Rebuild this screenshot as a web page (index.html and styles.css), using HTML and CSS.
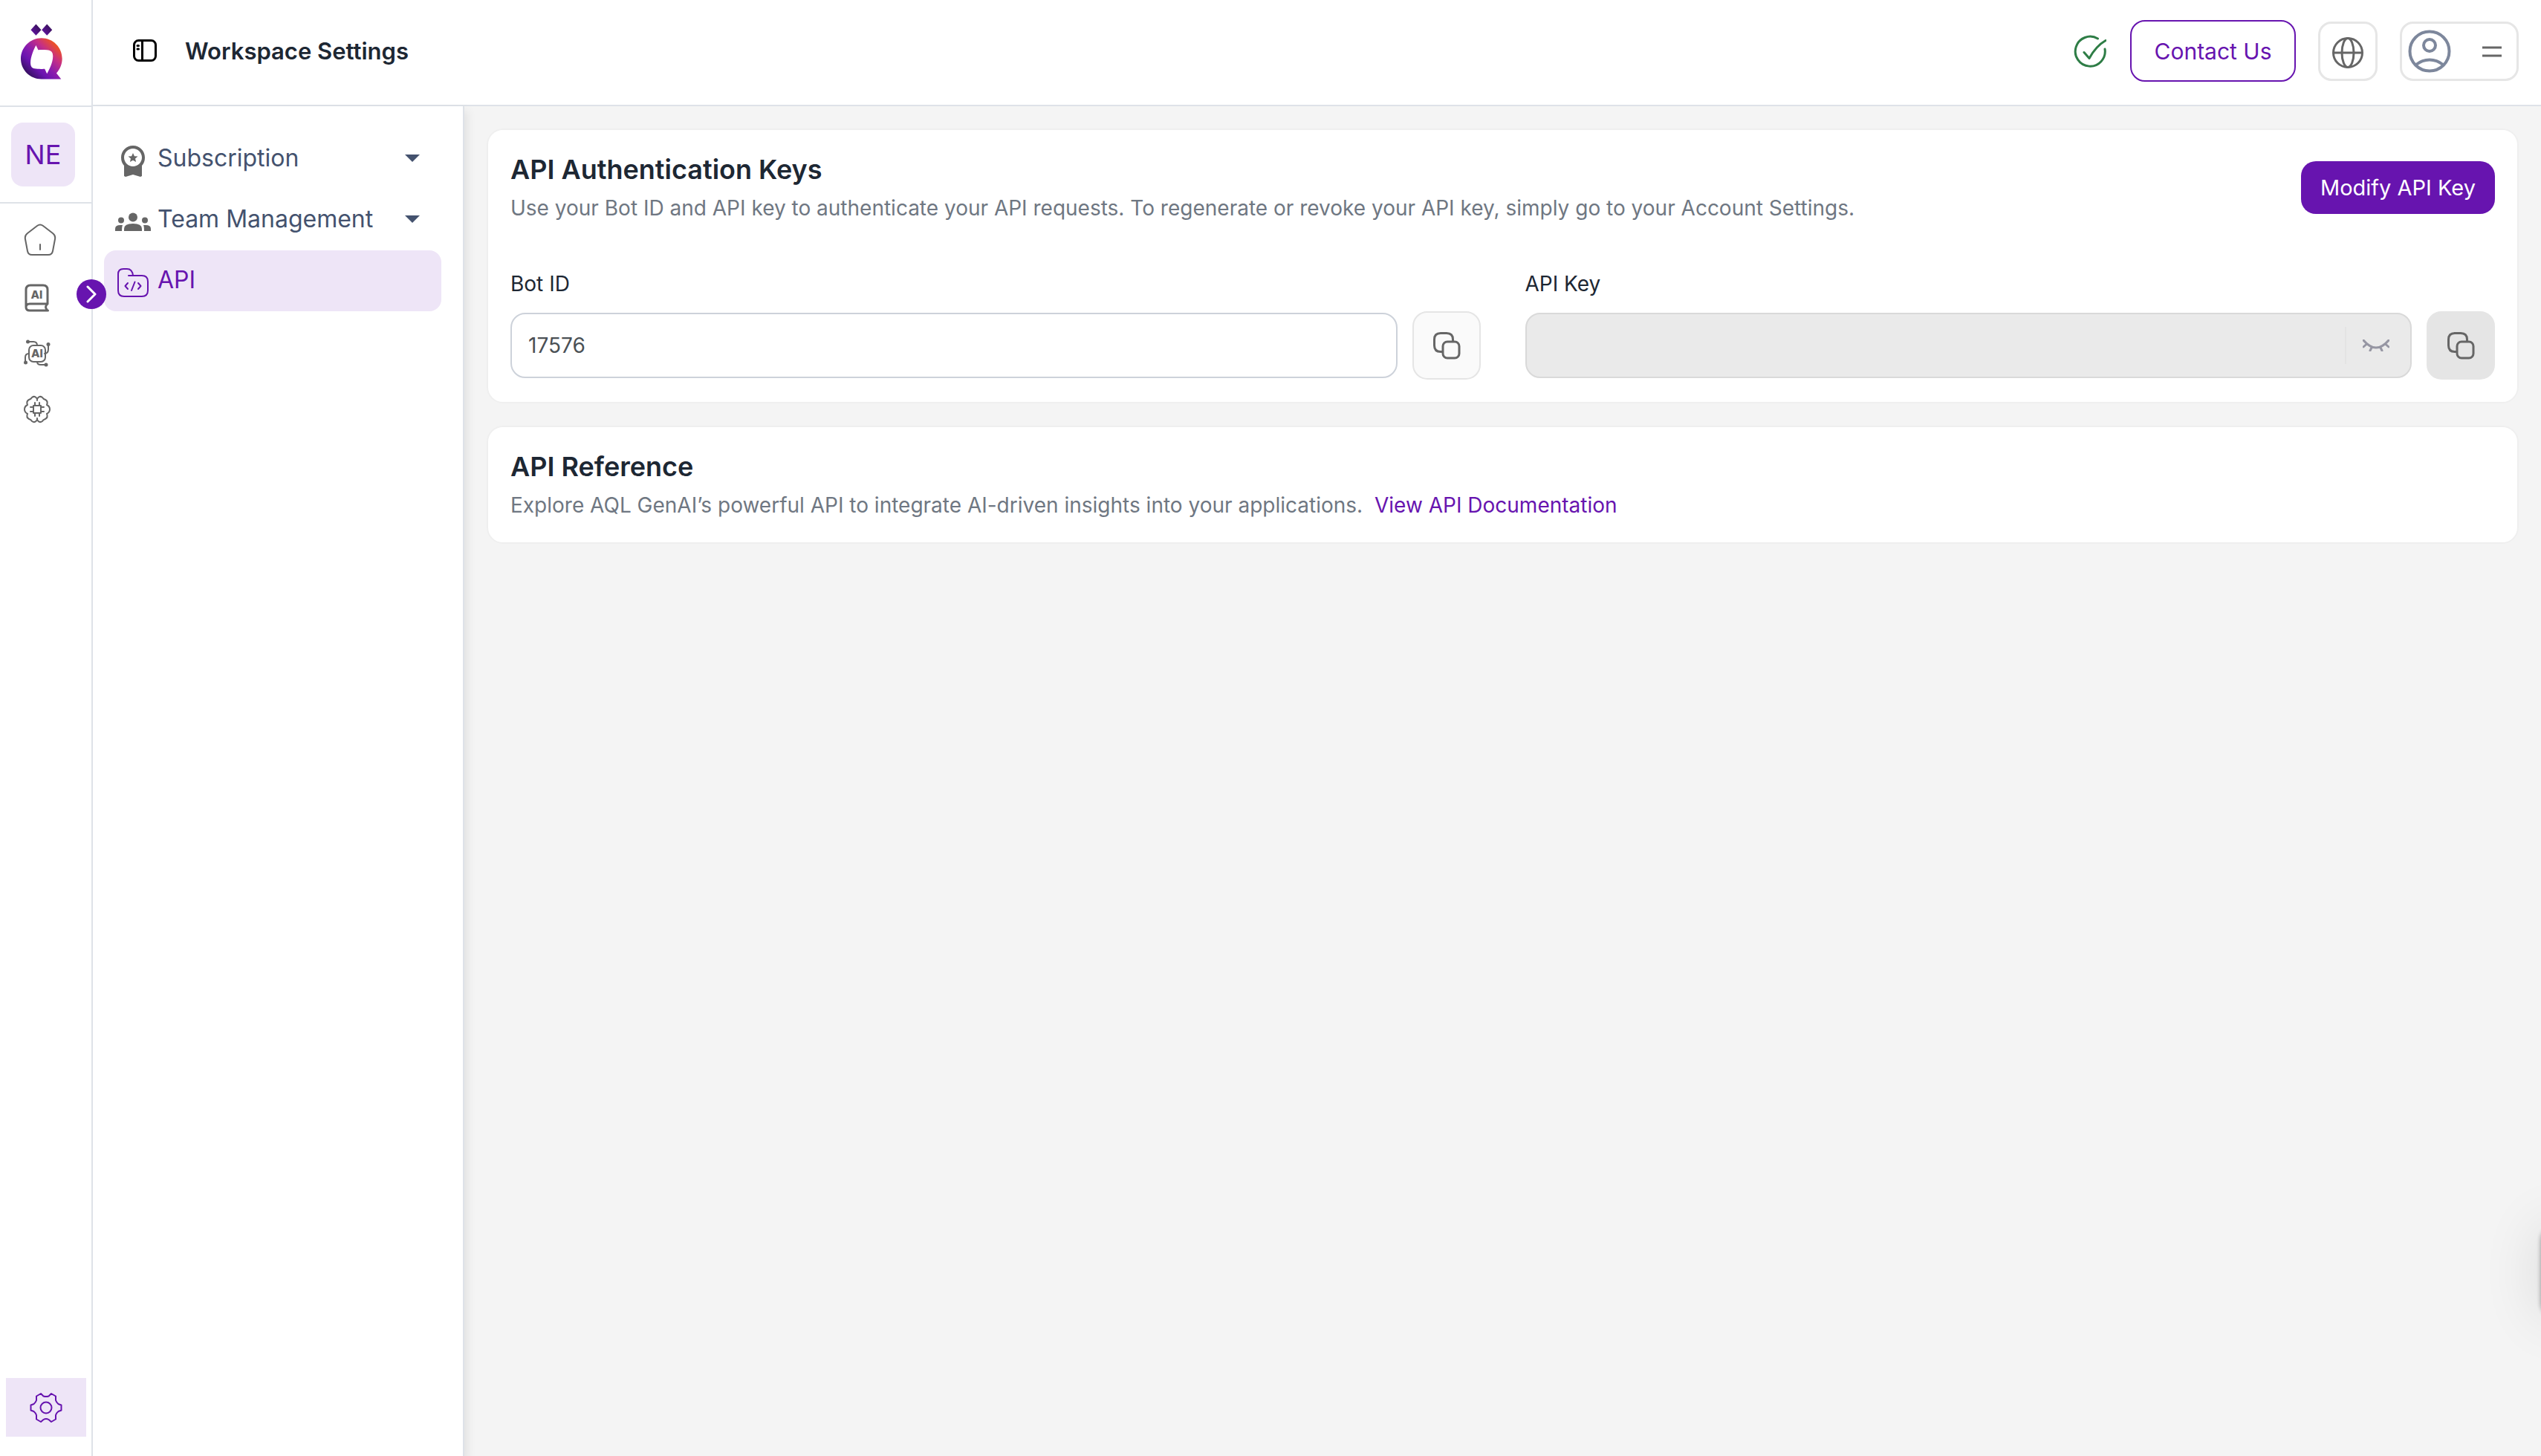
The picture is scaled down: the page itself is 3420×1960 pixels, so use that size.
FILE: index.html
```html
<!DOCTYPE html>
<html lang="en">
<head>
<meta charset="utf-8">
<meta name="viewport" content="width=device-width, initial-scale=1">
<title>Workspace Settings</title>
<link rel="stylesheet" href="styles.css">
</head>
<body>
<div class="app">
  <aside class="rail">
    <a class="rail-logo" href="#" aria-label="Home page">
      <svg width="56" height="75" viewBox="39 36 167 223">
        <defs>
          <linearGradient id="q" x1="0.1" y1="0.9" x2="0.85" y2="0.15">
            <stop offset="0" stop-color="#2a0f4f"/>
            <stop offset="0.3" stop-color="#6a14b0"/>
            <stop offset="0.5" stop-color="#8a1cae"/>
            <stop offset="0.75" stop-color="#c52f86"/>
            <stop offset="1" stop-color="#ee5223"/>
          </linearGradient>
          <linearGradient id="d" x1="0" y1="1" x2="1" y2="0">
            <stop offset="0" stop-color="#6a14b0"/>
            <stop offset="1" stop-color="#2d1048"/>
          </linearGradient>
        </defs>
        <path fill="url(#d)" d="M100 37l21 23-21 23-21-23z"/>
        <path fill="url(#d)" d="M144 37l21 23-21 23-21-23z"/>
        <path fill="url(#q)" fill-rule="evenodd" d="M122 93c46 0 83 37 83 83 0 22-9 43-23 58l19 24h-79c-46 0-83-37-83-82s37-83 83-83zM100 122c-8 14-22 46-22 70 0 16 6 23 22 24 14 1 24 2 35 1l9 19c8-14 24-44 24-70 0-16-7-24-24-25-12-1-24-2-35 0z"/>
      </svg>
    </a>
    <div class="rail-workspace"><button class="workspace" type="button">NE</button></div>
    <nav class="rail-nav" aria-label="Main">
      <a class="rail-link rail-home" href="#" aria-label="Home">
        <svg width="44" height="44" viewBox="0 0 44 44" class="line">
          <path d="M18 3q4-3 8 0l13 10q4 3 3 8l-3 16q-1 5-6 5H11q-5 0-6-5L2 21q-1-5 3-8zM22 28v7"/>
        </svg>
      </a>
      <a class="rail-link" href="#" aria-label="Knowledge">
        <svg width="36" height="38" viewBox="0 0 36 38" class="line bold">
          <path d="M3 31V8q0-6 6-6h17q6 0 6 6v19H8q-5 0-5 4.500t5 4.500h24.500M32 27q-5 4 0 9"/>
          <text x="17.500" y="20" class="glyph">AI</text>
        </svg>
      </a>
      <a class="rail-link" href="#" aria-label="Agents">
        <svg width="36" height="38" viewBox="0 0 36 38" class="line">
          <rect x="7" y="8" width="22" height="22" rx="6"/>
          <path d="M6 3h7q5 0 5 5M33 7v6q0 6-5 6M30 34h-7q-5 0-5-4M2 30v-6q0-5 5-5"/>
          <g class="dot"><circle cx="5.500" cy="3" r="2.500"/><circle cx="33" cy="6.500" r="2.500"/><circle cx="30" cy="34" r="2.500"/><circle cx="2.500" cy="31" r="2.500"/></g>
          <text x="18" y="24" class="glyph">AI</text>
        </svg>
      </a>
      <a class="rail-link" href="#" aria-label="Models">
        <svg width="36" height="38" viewBox="0 0 36 38" class="line">
          <path d="M18 5q-3-5-7-2-1 2-4 3-4 2-2 7-4 2-4 6t4 6q-2 5 2 7 3 1 4 3 4 3 7-2 3 5 7 2 1-2 4-3 4-2 2-7 4-2 4-6t-4-6q2-5-2-7-3-1-4-3-4-3-7 2zM18 5v2M18 31v2"/>
          <rect x="13" y="14" width="10" height="10"/>
          <path d="M15 14v-4M21 14v-4M15 28v-4M21 28v-4M13 16H9M13 22H9M23 16h4M23 22h4"/>
        </svg>
      </a>
    </nav>
    <a class="rail-settings" href="#" aria-label="Settings">
      <svg width="44" height="42" viewBox="0 0 44 42">
        <path d="M18.500 5.500q3.500 1 7 0L29 2l6 3.500V11q1 3 3.500 5l4 1.500v7L38.500 26q-2.500 2-3.500 5v5.500L29 40l-3.500-3q-3.500-2-7 0L15 40l-6-3.500V31q-1-3-3.500-5l-4-1.500v-7L5.500 16Q8 14 9 11V5.500L15 2z"/>
        <circle cx="22" cy="21" r="7.500"/>
      </svg>
    </a>
    <button class="rail-toggle" type="button" aria-label="Expand menu">
      <svg width="14" height="24" viewBox="0 0 14 24"><path d="M2 2l10 10L2 22"/></svg>
    </button>
  </aside>

  <div class="page">
    <header class="topbar">
      <button class="icon-button" type="button" aria-label="Toggle sidebar">
        <svg width="32" height="32" viewBox="0 0 32 32"><rect x="1.500" y="1.500" width="29" height="27" rx="6"/><path d="M12.500 2v26"/><path d="M6 8.500h1.500M6 13h1.500" stroke-linecap="round"/></svg>
      </button>
      <h1 class="topbar-title">Workspace Settings</h1>
      <div class="topbar-actions">
        <svg class="status" width="44" height="44" viewBox="0 0 44 44"><path d="M32.500 5A20 20 0 1 0 42 19"/><path d="M14 23.500l7 8Q30 15 43 7.500"/></svg>
        <button class="contact" type="button">Contact Us</button>
        <button class="language" type="button" aria-label="Language">
          <svg width="42" height="42" viewBox="0 0 42 42"><circle cx="21" cy="21" r="19.500"/><ellipse cx="21" cy="21" rx="8" ry="19.500"/><path d="M2 21h38"/></svg>
        </button>
        <button class="account" type="button" aria-label="Account menu">
          <svg class="avatar" width="58" height="58" viewBox="0 0 58 58"><circle cx="29" cy="29" r="26.500"/><circle cx="29" cy="21" r="8"/><path d="M11 47q8-6.500 18-6.500T47 47"/></svg>
          <svg class="menu" width="26" height="16" viewBox="0 0 26 16"><path d="M0 3h26M0 14h26"/></svg>
        </button>
      </div>
    </header>

    <div class="body">
      <nav class="sidenav" aria-label="Workspace settings">
        <button class="side-link" type="button">
          <svg class="side-icon solid" width="48" height="42" viewBox="0 0 48 42"><path fill-rule="evenodd" d="M24 0c9 0 16 7 16 16 0 5-1.500 8-4 11v14l-2 1-10-3-10 3-2-1V27c-2.500-3-4-6-4-11C8 7 15 0 24 0zm0 4c-6.500 0-12 5.500-12 12s5.500 12 12 12 12-5.500 12-12S30.500 4 24 4z"/><path d="M24 10l1.900 4.200 4.600.4-3.500 3 1.100 4.500-4.100-2.400-4.100 2.400 1.100-4.500-3.500-3 4.600-.4z"/></svg>
          <span class="side-text">Subscription</span>
          <svg class="caret" width="20" height="10" viewBox="0 0 20 10"><path d="M0 0h20L10 10z"/></svg>
        </button>
        <button class="side-link" type="button">
          <svg class="side-icon solid" width="48" height="26" viewBox="0 0 48 26"><circle cx="24" cy="6.500" r="6"/><circle cx="8" cy="10.500" r="4"/><circle cx="40" cy="10.500" r="4"/><path d="M12 25v-3q0-7 12-7t12 7v3zM0 25v-3q0-5 7-5h3q-1 2-1 8zM48 25v-3q0-5-7-5h-3q1 2 1 8z"/></svg>
          <span class="side-text">Team Management</span>
          <svg class="caret" width="20" height="10" viewBox="0 0 20 10"><path d="M0 0h20L10 10z"/></svg>
        </button>
        <a class="side-link active" href="#" aria-current="page">
          <svg class="side-icon folder" width="48" height="40" viewBox="0 0 48 40"><path d="M18 10h18q8 0 8 8v12q0 8-8 8H12q-8 0-8-8V8q0-7 7-7h5q7 0 8 9"/><path d="M17 20l-3.500 4 3.500 4M31 20l3.500 4-3.500 4M26.500 18.500L22 30"/></svg>
          <span class="side-text">API</span>
        </a>
      </nav>

      <main class="content">
        <section class="card">
          <div class="card-head">
            <div>
              <h2 class="card-title">API Authentication Keys</h2>
              <p class="card-text">Use your Bot ID and API key to authenticate your API requests. To regenerate or revoke your API key, simply go to your Account Settings.</p>
            </div>
            <button class="primary" type="button">Modify API Key</button>
          </div>
          <div class="fields">
            <div class="field">
              <label class="label" for="bot-id">Bot ID</label>
              <div class="field-row">
                <div class="control"><input class="input" id="bot-id" type="text" value="17576" readonly></div>
                <button class="copy" type="button" aria-label="Copy bot ID">
                  <svg width="36" height="36" viewBox="0 0 36 36"><path d="M12.500 26.500H10q-8.500 0-8.500-8.500v-8q0-8.500 8.500-8.500h8q8.500 0 8.500 8.500v2"/><rect x="13" y="13" width="22" height="22" rx="6"/></svg>
                </button>
              </div>
            </div>
            <div class="field">
              <label class="label" for="api-key">API Key</label>
              <div class="field-row">
                <div class="control disabled">
                  <input class="input" id="api-key" type="password" disabled>
                  <button class="reveal" type="button" aria-label="Show API key" disabled>
                    <svg width="36" height="16" viewBox="0 0 36 16"><path d="M1 1q17 20 34 0M5.500 6L1 10M30.500 6L35 10M12.500 10L10 15M23.500 10L26 15"/></svg>
                  </button>
                </div>
                <button class="copy muted" type="button" aria-label="Copy API key" disabled>
                  <svg width="36" height="36" viewBox="0 0 36 36"><path d="M12.500 26.500H10q-8.500 0-8.500-8.500v-8q0-8.500 8.500-8.500h8q8.500 0 8.500 8.500v2"/><rect x="13" y="13" width="22" height="22" rx="6"/></svg>
                </button>
              </div>
            </div>
          </div>
        </section>

        <section class="card">
          <h2 class="card-title">API Reference</h2>
          <p class="card-text">Explore AQL GenAI’s powerful API to integrate AI-driven insights into your applications. <a class="link" href="#">View API Documentation</a></p>
        </section>
      </main>
    </div>
  </div>
</div>
<div class="widget"></div>
</body>
</html>
```
FILE: styles.css
```css
:root {
  --purple: #6714af;
  --tint: #eee5f7;
  --line: #dee2e8;
  --grey: #666666;
  --ink: #1d2733;
}

* { box-sizing: border-box; }

body {
  margin: 0;
  font-family: Inter, "Liberation Sans", sans-serif;
  font-size: 28px;
  color: var(--ink);
  background: #f4f4f4;
}

button, input { font: inherit; color: inherit; margin: 0; }
button { padding: 0; border: 0; background: none; cursor: pointer; }
a { text-decoration: none; color: inherit; }
h1, h2, p { margin: 0; }
svg { display: block; flex: none; fill: none; stroke: currentColor; stroke-width: 3; }

.app { display: flex; min-height: 100vh; }

/* Icon rail */
.rail {
  position: relative;
  z-index: 3;
  flex: none;
  display: flex;
  flex-direction: column;
  width: 125px;
  background: #fff;
  border-right: 2px solid var(--line);
  color: var(--grey);
}
.rail-logo {
  height: 144px;
  padding: 32px 0 0 28px;
  border-bottom: 2px solid var(--line);
}
.rail-logo svg { stroke: none; }
.rail-workspace {
  height: 130px;
  padding: 21px 15px;
  border-bottom: 2px solid var(--line);
}
.workspace {
  width: 86px;
  height: 86px;
  border-radius: 16px;
  background: var(--tint);
  color: var(--purple);
  font-size: 36px;
}
.rail-nav { padding-top: 9px; }
.rail-link {
  display: flex;
  align-items: center;
  height: 75px;
  padding-left: 32px;
}
.rail-home { height: 80px; }
.line { stroke-width: 2; stroke-linecap: round; stroke-linejoin: round; }
.line.bold { stroke-width: 3; }
.dot { fill: currentColor; stroke: none; }
.glyph {
  fill: currentColor;
  stroke: none;
  font-size: 15px;
  font-weight: 800;
  text-anchor: middle;
}
.rail-settings {
  display: flex;
  align-items: center;
  justify-content: center;
  height: 79px;
  margin: auto 7px 26px 8px;
  background: var(--tint);
  color: var(--purple);
}
.rail-settings svg { stroke-width: 2; stroke-linejoin: round; }
.rail-toggle {
  position: absolute;
  top: 376px;
  right: -20px;
  display: flex;
  align-items: center;
  justify-content: center;
  width: 40px;
  height: 40px;
  border-radius: 50%;
  background: var(--purple);
  color: #fff;
}
.rail-toggle svg { stroke-linecap: round; stroke-linejoin: round; }

/* Top bar */
.page { flex: 1; min-width: 0; display: flex; flex-direction: column; }
.topbar {
  display: flex;
  align-items: center;
  height: 143px;
  padding: 0 30px 4px 54px;
  background: #fff;
  border-bottom: 2px solid var(--line);
}
.icon-button { color: #000; }
.topbar-title { margin-left: 38px; font-size: 31px; line-height: 40px; font-weight: 600; }
.topbar-actions { display: flex; align-items: center; gap: 30px; margin-left: auto; }
.status { margin-right: 2px; color: #2e7d46; stroke-linecap: round; stroke-linejoin: round; }
.contact {
  width: 223px;
  height: 83px;
  border: 2px solid var(--purple);
  border-radius: 20px;
  color: var(--purple);
  font-size: 30px;
}
.language, .account {
  display: flex;
  align-items: center;
  justify-content: center;
  height: 80px;
  border: 3px solid #e6e6e6;
  border-radius: 18px;
  color: var(--grey);
}
.language { width: 80px; padding-top: 4px; }
.account { width: 160px; justify-content: space-between; padding: 0 20px 0 8px; }
.avatar { color: #7d879c; stroke-width: 4; }

/* Section menu */
.body { flex: 1; display: flex; }
.sidenav {
  position: relative;
  z-index: 2;
  flex: none;
  width: 500px;
  padding: 30px 29px 0 15px;
  background: #fff;
  border-right: 2px solid var(--line);
  box-shadow: 4px 6px 12px rgba(0, 0, 0, 0.08);
}
.side-link {
  display: flex;
  align-items: center;
  width: 100%;
  height: 82px;
  padding: 0 29px 3px 15px;
  border-radius: 16px;
  color: #44526e;
  font-size: 32px;
  text-align: left;
}
.side-link.active { background: var(--tint); color: var(--purple); }
.side-text { flex: 1; margin-left: 9px; }
.side-icon { margin-top: 8px; }
.side-icon.solid { fill: var(--grey); stroke: none; }
.side-icon.folder { stroke-width: 2; stroke-linecap: round; stroke-linejoin: round; }
.caret { fill: currentColor; stroke: none; }

/* Content */
.content {
  flex: 1;
  min-width: 0;
  display: flex;
  flex-direction: column;
  gap: 30px;
  padding: 30px;
}
.card {
  padding: 30px;
  background: #fff;
  border: 2px solid #efefef;
  border-radius: 22px;
}
.card-head { display: flex; align-items: center; justify-content: space-between; gap: 30px; }
.card-title { margin-bottom: 9px; font-size: 36px; line-height: 46px; font-weight: 600; }
.card-text { line-height: 40px; color: #6f7782; }
.link { margin-left: 8px; color: var(--purple); }
.primary {
  flex: none;
  width: 261px;
  height: 71px;
  border-radius: 20px;
  background: var(--purple);
  color: #fff;
  font-size: 29px;
}
.fields { display: grid; grid-template-columns: 1fr 1fr; gap: 60px; margin-top: 62px; }
.label { display: block; margin-bottom: 17px; line-height: 40px; }
.field-row { display: flex; align-items: center; gap: 20px; }
.control {
  flex: 1;
  display: flex;
  align-items: center;
  height: 88px;
  border: 2px solid #cdd2da;
  border-radius: 20px;
  background: #fff;
}
.control.disabled { background: #eaeaea; border-color: #d9d9d9; }
.input {
  flex: 1;
  min-width: 0;
  height: 100%;
  padding: 0 22px;
  border: 0;
  background: none;
  color: #4a5055;
}
.reveal {
  display: flex;
  align-items: center;
  height: 50px;
  padding: 0 28px 0 22px;
  border-left: 2px solid #e3e3e3;
  color: #9696a3;
}
.reveal svg { stroke-linecap: round; }
.copy {
  display: flex;
  align-items: center;
  justify-content: center;
  width: 92px;
  height: 92px;
  border: 2px solid #e5e5e5;
  border-radius: 20px;
  background: #fafafa;
  color: var(--grey);
}
.copy svg { overflow: visible; }
.copy.muted { background: #e5e5e5; }

/* Docked chat launcher, parked beyond the window edge */
.widget {
  position: fixed;
  right: -60px;
  bottom: 186px;
  width: 60px;
  height: 124px;
  border-radius: 20px;
  box-shadow: 0 0 6px rgba(0, 0, 0, 0.4), 0 0 80px rgba(0, 0, 0, 0.12);
}
```
